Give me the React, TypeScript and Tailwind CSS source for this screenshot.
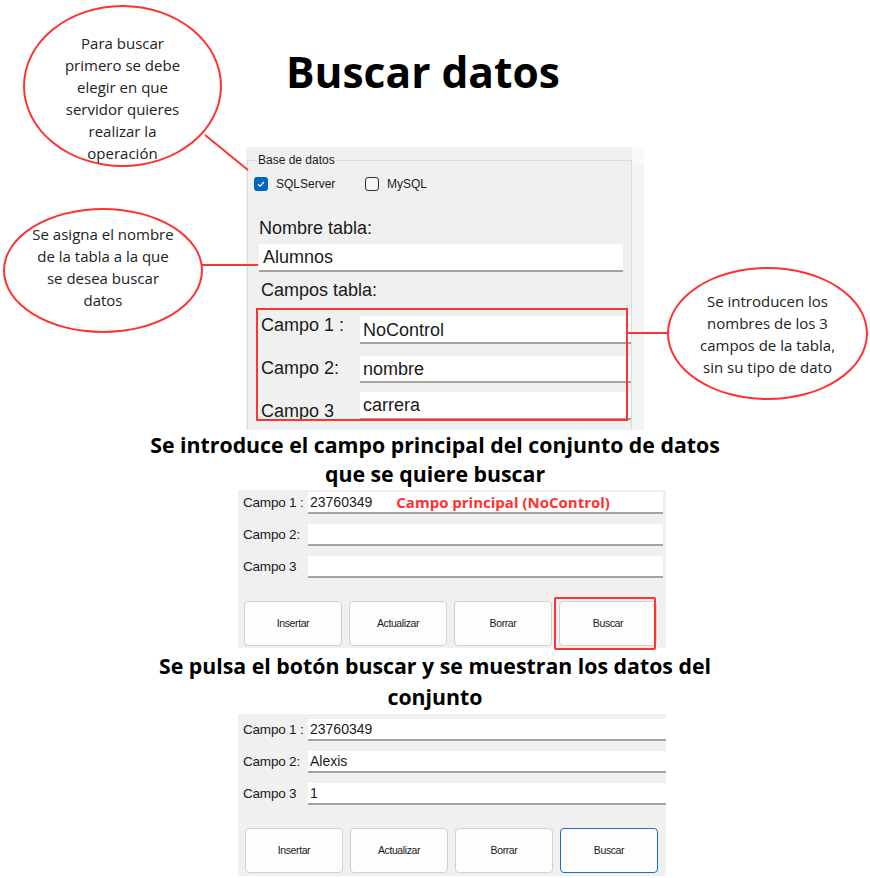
import React from 'react';

const bubbleText = "font-['Open_Sans',sans-serif] text-[15px] leading-[22px] text-[#222] text-center";
const formFont = "font-['Liberation_Sans',Arial,sans-serif] text-[#1a1a1a]";

function CheckBox({ checked }: { checked?: boolean }) {
  if (checked) {
    return (
      <span className="w-[14px] h-[14px] rounded-[3px] bg-[#0067c0] flex items-center justify-center">
        <svg width="10" height="10" viewBox="0 0 10 10">
          <path d="M2 5.2 L4.1 7.2 L8 3" fill="none" stroke="white" strokeWidth="1.2" />
        </svg>
      </span>
    );
  }
  return <span className="w-[14px] h-[14px] rounded-[3px] border border-[#333] bg-[#f7f7f7]" />;
}

function SmallRow({ label, value, first, children }: { label: string; value?: string; first?: boolean; children?: React.ReactNode }) {
  return (
    <div className={`flex items-center h-[22px] ${first ? '' : 'mt-[10px]'}`}>
      <span className="w-[70px] pl-[5px] text-[13.5px] leading-[18px] tracking-[-0.2px]">{label}</span>
      <div className="flex-1 h-[22px] bg-white border-b-2 border-[#a3a3a3] flex items-center pl-[2px] text-[14px]">
        <span>{value}</span>
        {children}
      </div>
    </div>
  );
}

function Buttons({ focused }: { focused?: boolean }) {
  const names = ['Insertar', 'Actualizar', 'Borrar', 'Buscar'];
  return (
    <div className="flex gap-[7px]">
      {names.map((n, i) => (
        <div
          key={n}
          className={`w-[98px] h-[45px] rounded-[4px] bg-[#fdfdfd] flex items-center justify-center text-[10.5px] tracking-[-0.4px] ${
            focused && i === 3 ? 'border-[1.5px] border-[#1b6fc8]' : 'border border-[#d0d0d0]'
          }`}
        >
          {n}
        </div>
      ))}
    </div>
  );
}

export default function App() {
  return (
    <div className="relative w-[870px] h-[878px] bg-white overflow-hidden flex flex-col">
      {/* Title */}
      <h1 className="mt-[51px] ml-[286px] text-[42.5px] leading-[42px] font-bold font-['Open_Sans',sans-serif] text-black">
        Buscar datos
      </h1>

      {/* Panel 1: base de datos */}
      <div className={`mt-[54px] ml-[246px] w-[398px] h-[283px] bg-[#f0f0f0] flex ${formFont}`}>
        <div className="relative mt-[13px] ml-[1px] w-[385px] border border-b-0 border-[#dcdcdc] flex flex-col">
          <span className="absolute -top-[9px] left-[9px] px-[1px] bg-[#f0f0f0] text-[12px] leading-[16px]">Base de datos</span>

          <div className="mt-[16px] pl-[6px] flex items-center h-[14px] text-[12px]">
            <div className="w-[111px] flex items-center">
              <CheckBox checked />
              <span className="ml-[8px]">SQLServer</span>
            </div>
            <CheckBox />
            <span className="ml-[8px]">MySQL</span>
          </div>

          <div className="mt-[26px] ml-[11px] text-[18px] leading-[22px]">Nombre tabla:</div>
          <div className="mt-[5px] ml-[11px] w-[364px] h-[28px] bg-white border-b-2 border-[#a3a3a3] flex items-center pl-[4px] text-[18px]">
            Alumnos
          </div>
          <div className="mt-[7px] ml-[13px] text-[18px] leading-[22px]">Campos tabla:</div>

          <div className="relative mt-[15px] text-[18px] leading-[22px]">
            <div className="flex items-start">
              <span className="ml-[13px] w-[99px] -mt-[2px]">Campo 1 :</span>
              <div className="w-[271px] h-[28px] bg-white border-b-2 border-[#a3a3a3] flex items-center pl-[3px] pt-[2px]">NoControl</div>
            </div>
            <div className="flex items-start mt-[12px]">
              <span className="ml-[13px] w-[99px] mt-[1px]">Campo 2:</span>
              <div className="w-[271px] h-[27px] bg-white border-b-2 border-[#a3a3a3] flex items-center pl-[3px]">nombre</div>
            </div>
            <div className="flex items-start mt-[9px]">
              <span className="ml-[13px] w-[99px] mt-[8px]">Campo 3</span>
              <div className="w-[271px] h-[28px] bg-white border-b-2 border-[#a3a3a3] flex items-center pl-[3px]">carrera</div>
            </div>
            <div className="absolute left-[8px] -top-[8px] w-[372px] h-[113px] border-2 border-[#ff3333]" />
          </div>
        </div>
        <div className="w-[12px] flex flex-col bg-[#f4f4f4]">
          <div className="h-[18px] bg-[#f9f9f9]" />
        </div>
      </div>

      {/* Heading 2 */}
      <p className="text-center font-bold text-[21.3px] leading-[29px] font-['Open_Sans',sans-serif] text-black">
        Se introduce el campo principal del conjunto de datos
        <br />
        que se quiere buscar
      </p>

      {/* Panel 2 */}
      <div className={`relative mt-[2px] ml-[238px] w-[428px] h-[158px] bg-[#f0f0f0] flex flex-col ${formFont}`}>
        <div className="mt-[2px] pr-[3px]">
          <SmallRow label="Campo 1 :" value="23760349" first>
            <span className="ml-[24px] font-['Open_Sans',sans-serif] font-bold text-[15px] text-[#ff3131]">
              Campo principal (NoControl)
            </span>
          </SmallRow>
          <SmallRow label="Campo 2:" />
          <SmallRow label="Campo 3" />
        </div>
        <div className="mt-[23px] pl-[6px]">
          <Buttons />
        </div>
        <div className="absolute left-[316px] top-[107px] w-[102px] h-[53px] border-2 border-[#ff3333] rounded-[2px]" />
      </div>

      {/* Heading 3 */}
      <p className="mt-[2px] text-center font-bold text-[21.3px] leading-[31px] font-['Open_Sans',sans-serif] text-black">
        Se pulsa el botón buscar y se muestran los datos del
        <br />
        conjunto
      </p>

      {/* Panel 3 */}
      <div className={`mt-[2px] ml-[238px] w-[428px] h-[162px] bg-[#f0f0f0] flex flex-col ${formFont}`}>
        <div className="mt-[5px]">
          <SmallRow label="Campo 1 :" value="23760349" first />
          <SmallRow label="Campo 2:" value="Alexis" />
          <SmallRow label="Campo 3" value="1" />
        </div>
        <div className="mt-[23px] pl-[7px]">
          <Buttons focused />
        </div>
      </div>

      {/* Callout bubbles */}
      <div className="absolute left-[23px] top-[5px] w-[199px] h-[162px] rounded-[50%] border-[2.5px] border-[#ff3333] flex flex-col items-center pt-[25px]">
        <p className={bubbleText}>
          Para buscar
          <br />
          primero se debe
          <br />
          elegir en que
          <br />
          servidor quieres
          <br />
          realizar la
          <br />
          operación
        </p>
      </div>
      <div className="absolute left-[3px] top-[208px] w-[200px] h-[125px] rounded-[50%] border-[2.5px] border-[#ff3333] flex flex-col items-center justify-center pb-[8px]">
        <p className={bubbleText}>
          Se asigna el nombre
          <br />
          de la tabla a la que
          <br />
          se desea buscar
          <br />
          datos
        </p>
      </div>
      <div className="absolute left-[667px] top-[267px] w-[201px] h-[133px] rounded-[50%] border-[2.5px] border-[#ff3333] flex flex-col items-center justify-center">
        <p className={`${bubbleText} leading-[22.6px]`}>
          Se introducen los
          <br />
          nombres de los 3
          <br />
          campos de la tabla,
          <br />
          sin su tipo de dato
        </p>
      </div>

      {/* Connectors */}
      <svg className="absolute inset-0 pointer-events-none" width="870" height="878">
        <line x1="205" y1="135" x2="248" y2="170" stroke="#ff3333" strokeWidth="2" />
        <line x1="202" y1="265" x2="258" y2="265" stroke="#ff3333" strokeWidth="2" />
        <line x1="628" y1="333" x2="668" y2="333" stroke="#ff3333" strokeWidth="2" />
      </svg>
    </div>
  );
}
